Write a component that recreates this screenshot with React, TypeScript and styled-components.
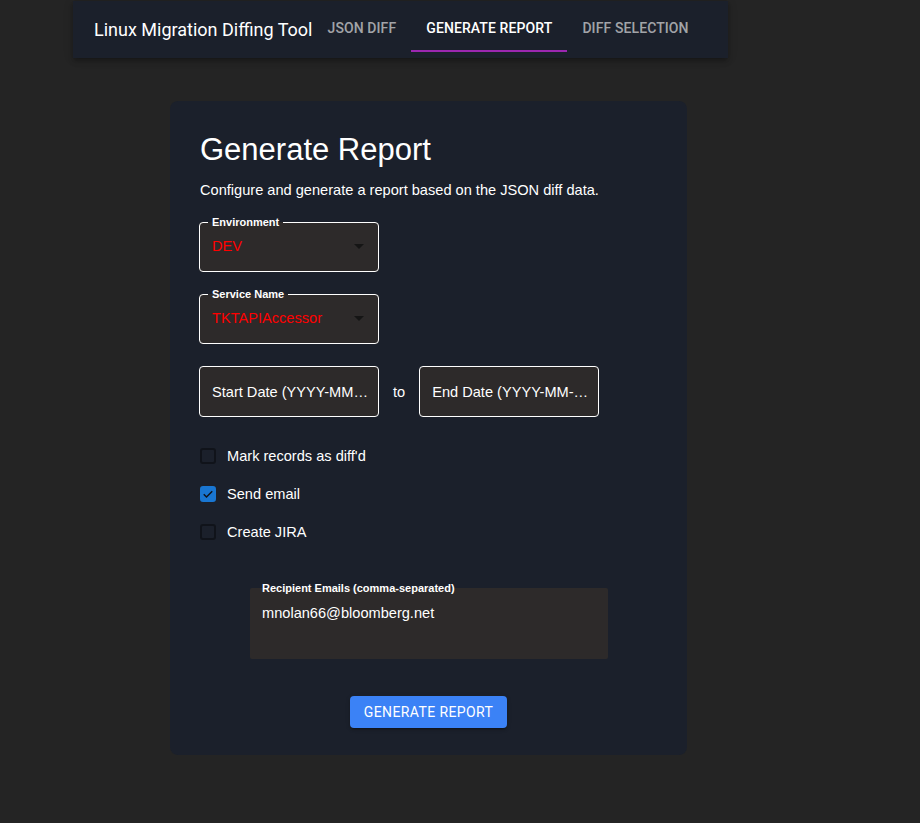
import React from "react";
import styled, { createGlobalStyle } from "styled-components";

const Global = createGlobalStyle`
  html, body { margin: 0; padding: 0; background: #242424; }
  body { font-family: "Liberation Sans", Arial, sans-serif; color: #fff; }
`;

const Page = styled.div`
  min-height: 823px;
  display: flex;
  flex-direction: column;
`;

const AppBar = styled.header`
  margin-left: 73px;
  margin-top: 1px;
  width: 655px;
  height: 57px;
  background: #1b202b;
  box-shadow: 0 2px 4px -1px rgba(0,0,0,0.2), 0 4px 5px 0 rgba(0,0,0,0.14), 0 1px 10px 0 rgba(0,0,0,0.12);
  display: flex;
  align-items: center;
  padding-left: 21px;
  box-sizing: border-box;
`;

const Brand = styled.div`
  font-family: Roboto, sans-serif;
  font-size: 18px;
  font-weight: 400;
  color: #fff;
  white-space: nowrap;
`;

const Tabs = styled.nav`
  display: flex;
  align-self: stretch;
`;

const Tab = styled.div<{ $active?: boolean }>`
  position: relative;
  display: flex;
  align-items: center;
  padding: 0 15px 3px;
  font-family: Roboto, sans-serif;
  font-size: 14px;
  font-weight: 500;
  letter-spacing: 0.1px;
  text-transform: uppercase;
  color: ${p => (p.$active ? "#ffffff" : "rgba(255,255,255,0.6)")};
  &::after {
    content: "";
    display: ${p => (p.$active ? "block" : "none")};
    position: absolute;
    left: 0; right: 0; bottom: 6px;
    height: 2px;
    background: #9c27b0;
  }
`;

const Card = styled.main`
  margin: 43px 0 0 170px;
  width: 517px;
  height: 654px;
  box-sizing: border-box;
  background: #1b202b;
  border-radius: 8px;
  padding: 30px 30px;
  display: flex;
  flex-direction: column;
`;

const Title = styled.h1`
  margin: 0;
  font-size: 31px;
  font-weight: 400;
  line-height: 37px;
`;

const Subtitle = styled.p`
  margin: 13px 0 0;
  font-size: 14.6px;
  line-height: 18px;
`;

const Fields = styled.div`
  margin: 18px 0 0 -1px;
  display: flex;
  flex-direction: column;
  gap: 17px;
`;

const Outlined = styled.fieldset`
  margin: 0;
  width: 180px;
  box-sizing: border-box;
  border: 1px solid #ffffff;
  border-radius: 4px;
  background: #2d2a2a;
  padding: 0;
  min-inline-size: 0;
`;

const Legend = styled.legend`
  font-size: 11px;
  font-weight: 700;
  padding: 0 4px;
  margin-left: 8px;
  line-height: 10px;
  color: #fff;
`;

const SelectInner = styled.div`
  height: 44px;
  box-sizing: border-box;
  padding: 0 12px 6px;
  display: flex;
  align-items: center;
`;

const SelectValue = styled.span`
  flex: 1;
  color: #ff0000;
  font-size: 14.6px;
`;

const Caret = styled.span`
  width: 0; height: 0;
  border-left: 5px solid transparent;
  border-right: 5px solid transparent;
  border-top: 5px solid #151515;
  margin-right: 2px;
`;

const DateRow = styled.div`
  margin-top: 5px;
  display: flex;
  align-items: center;
  gap: 14px;
`;

const DateBox = styled.div`
  width: 180px;
  height: 51px;
  box-sizing: border-box;
  border: 1px solid #fff;
  border-radius: 4px;
  background: #2d2a2a;
  padding: 0 8px 0 12px;
  display: flex;
  align-items: center;
  font-size: 14.6px;
  color: #fff;
`;

const Ellip = styled.span`
  overflow: hidden;
  white-space: nowrap;
  text-overflow: ellipsis;
`;

const To = styled.span`
  font-size: 14.6px;
`;

const Checks = styled.div`
  margin-top: 30px;
  display: flex;
  flex-direction: column;
  gap: 20px;
`;

const CheckRow = styled.label`
  display: flex;
  align-items: center;
  gap: 11px;
  font-size: 14.6px;
  height: 18px;
`;

const Box = styled.span<{ $checked?: boolean }>`
  width: 16px;
  height: 16px;
  box-sizing: border-box;
  border-radius: 3px;
  border: 2px solid ${p => (p.$checked ? "#1976d2" : "#10131a")};
  background: ${p => (p.$checked ? "#1976d2" : "transparent")};
  display: flex;
  align-items: center;
  justify-content: center;
`;

const Recipients = styled.fieldset`
  margin: 41px 0 0 50px;
  width: 358px;
  box-sizing: border-box;
  border: none;
  border-radius: 2px;
  background: #2d2a2a;
  padding: 0 12px;
  min-inline-size: 0;
`;

const RecLegend = styled.legend`
  font-size: 11px;
  font-weight: 700;
  padding: 0;
  line-height: 12px;
  color: #fff;
`;

const RecBody = styled.div`
  height: 65px;
  box-sizing: border-box;
  padding-top: 10px;
  font-size: 14.6px;
  line-height: 18px;
  color: #fff;
`;

const Actions = styled.div`
  margin-top: 37px;
  display: flex;
  justify-content: center;
`;

const Button = styled.button`
  height: 32px;
  padding: 0 14px;
  background: #3b82f6;
  color: #fff;
  border: none;
  border-radius: 4px;
  font-family: Roboto, sans-serif;
  font-size: 14px;
  font-weight: 400;
  letter-spacing: 0.4px;
  text-transform: uppercase;
  box-shadow: 0 3px 1px -2px rgba(0,0,0,0.2), 0 2px 2px 0 rgba(0,0,0,0.14), 0 1px 5px 0 rgba(0,0,0,0.12);
`;

const Check = () => (
  <svg width="12" height="12" viewBox="0 0 24 24">
    <path d="M3.5 12.5l5.5 5.5L20.5 6.5" fill="none" stroke="#10131a" strokeWidth="3" />
  </svg>
);

export default function App() {
  return (
    <Page>
      <Global />
      <AppBar>
        <Brand>Linux Migration Diffing Tool</Brand>
        <Tabs>
          <Tab>JSON Diff</Tab>
          <Tab $active>Generate Report</Tab>
          <Tab>Diff Selection</Tab>
        </Tabs>
      </AppBar>
      <Card>
        <Title>Generate Report</Title>
        <Subtitle>Configure and generate a report based on the JSON diff data.</Subtitle>
        <Fields>
          <Outlined>
            <Legend>Environment</Legend>
            <SelectInner>
              <SelectValue>DEV</SelectValue>
              <Caret />
            </SelectInner>
          </Outlined>
          <Outlined>
            <Legend>Service Name</Legend>
            <SelectInner>
              <SelectValue>TKTAPIAccessor</SelectValue>
              <Caret />
            </SelectInner>
          </Outlined>
          <DateRow>
            <DateBox><Ellip>Start Date (YYYY-MM-DD)</Ellip></DateBox>
            <To>to</To>
            <DateBox><Ellip>End Date (YYYY-MM-DD)</Ellip></DateBox>
          </DateRow>
        </Fields>
        <Checks>
          <CheckRow><Box />Mark records as diff'd</CheckRow>
          <CheckRow><Box $checked><Check /></Box>Send email</CheckRow>
          <CheckRow><Box />Create JIRA</CheckRow>
        </Checks>
        <Recipients>
          <RecLegend>Recipient Emails (comma-separated)</RecLegend>
          <RecBody>mnolan66@bloomberg.net</RecBody>
        </Recipients>
        <Actions>
          <Button>Generate Report</Button>
        </Actions>
      </Card>
    </Page>
  );
}
